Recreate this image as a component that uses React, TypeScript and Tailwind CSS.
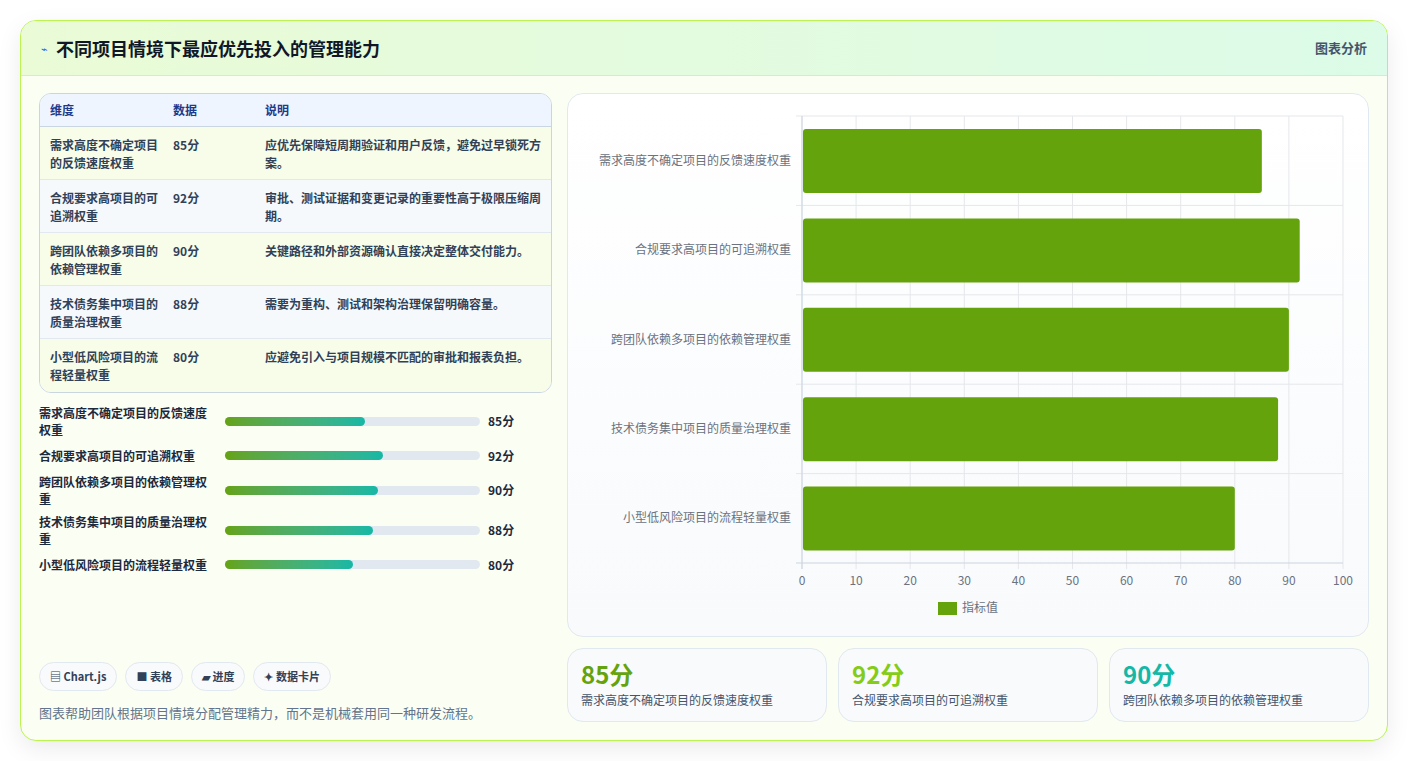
import React from "react";

const rows = [
  ["需求高度不确定项目的反馈速度权重", 85, "应优先保障短周期验证和用户反馈，避免过早锁死方案。"],
  ["合规要求高项目的可追溯权重", 92, "审批、测试证据和变更记录的重要性高于极限压缩周期。"],
  ["跨团队依赖多项目的依赖管理权重", 90, "关键路径和外部资源确认直接决定整体交付能力。"],
  ["技术债务集中项目的质量治理权重", 88, "需要为重构、测试和架构治理保留明确容量。"],
  ["小型低风险项目的流程轻量权重", 80, "应避免引入与项目规模不匹配的审批和报表负担。"],
] as const;

const font = { fontFamily: '"Noto Sans CJK SC", "Noto Sans", sans-serif' };

function Chart() {
  const x0 = 234, x1 = 775, y0 = 22, y1 = 469;
  const band = (y1 - y0) / 5;
  const sc = (x1 - x0) / 100;
  return (
    <svg width="800" height="540" viewBox="0 0 800 540" style={font}>
      {Array.from({ length: 11 }).map((_, i) => (
        <line key={i} x1={x0 + i * sc * 10} x2={x0 + i * sc * 10} y1={y0} y2={y1 + 6} stroke="#e5e7eb" />
      ))}
      {Array.from({ length: 6 }).map((_, i) => (
        <line key={i} x1={x0 - 6} x2={x1} y1={y0 + i * band} y2={y0 + i * band} stroke={i === 5 ? "#cbd5e1" : "#e5e7eb"} />
      ))}
      <line x1={x0} x2={x0} y1={y0} y2={y1 + 6} stroke="#cbd5e1" />
      {rows.map((r, i) => (
        <g key={i}>
          <rect x={x0 + 1} y={y0 + i * band + 13} width={r[1] * sc - 1} height={64} rx="3" fill="#65a30d" />
          <text x={223} y={y0 + i * band + band / 2 + 4} textAnchor="end" fontSize="12" fill="#6b7280">{r[0]}</text>
        </g>
      ))}
      {Array.from({ length: 11 }).map((_, i) => (
        <text key={i} x={x0 + i * sc * 10} y={491} textAnchor="middle" fontSize="12" fill="#6b7280">{i * 10}</text>
      ))}
      <rect x="370" y="508" width="19" height="13" fill="#65a30d" />
      <text x="394" y="518" fontSize="12" fill="#6b7280">指标值</text>
    </svg>
  );
}

export default function App() {
  return (
    <div className="min-h-[761px] bg-white p-5" style={font}>
      <div className="rounded-2xl border border-lime-300 bg-[#fbfff3] shadow-[0_8px_24px_rgba(0,0,0,0.08)] overflow-hidden">
        <div className="h-[55px] flex items-center justify-between px-5 bg-gradient-to-r from-[#eafbd6] to-[#dcfbe8] border-b border-[#dbe7d5]">
          <div className="flex items-center gap-2">
            <span className="text-[11px] text-blue-600">⌁</span>
            <h1 className="text-[18px] font-bold text-gray-900">不同项目情境下最应优先投入的管理能力</h1>
          </div>
          <span className="text-[13px] font-semibold text-slate-600">图表分析</span>
        </div>
        <div className="flex gap-[15px] px-[18px] pt-[17px] pb-[18px]">
          <div className="w-[513px] flex flex-col">
            <div className="rounded-xl border border-slate-300 overflow-hidden text-[12px]">
              <div className="grid grid-cols-[123px_92px_1fr] h-[33px] items-center px-[10px] bg-[#eef5ff] border-b border-slate-300 font-semibold text-[#1e3a8a]">
                <span>维度</span><span>数据</span><span>说明</span>
              </div>
              {rows.map((r, i) => (
                <div key={i} className={`grid grid-cols-[123px_92px_1fr] h-[53px] pt-[9px] px-[10px] leading-[18px] font-semibold text-slate-700 ${i % 2 === 0 ? "bg-[#f7fde9]" : "bg-[#f6f9fc]"} ${i < 4 ? "border-b border-slate-200" : ""}`}>
                  <span className="pr-3">{r[0]}</span>
                  <span>{r[1]}分</span>
                  <span>{r[2]}</span>
                </div>
              ))}
            </div>
            <div className="mt-[11px] flex flex-col gap-[6px]">
              {rows.map((r, i) => (
                <div key={i} className="flex items-center text-[12px] font-semibold text-slate-800">
                  <span className="w-[172px] leading-[17px] min-h-[23px] flex items-center">{r[0]}</span>
                  <div className="ml-[14px] w-[255px] h-[9px] rounded-full bg-[#e2e8f0]">
                    <div className="h-full rounded-full bg-gradient-to-r from-[#65a30d] to-[#14b8a6]" style={{ width: `${(r[1] - 30) * 2.55}px` }} />
                  </div>
                  <span className="ml-[8px]">{r[1]}分</span>
                </div>
              ))}
            </div>
            <div className="mt-auto flex gap-2 text-[11px] font-semibold text-slate-700">
              {["▤ Chart.js", "■ 表格", "▰ 进度", "✦ 数据卡片"].map((c) => (
                <span key={c} className="h-[29px] px-[10px] flex items-center rounded-full border border-slate-200 bg-[#f8fafc]">{c}</span>
              ))}
            </div>
            <p className="mt-[12px] text-[13px] text-slate-500">图表帮助团队根据项目情境分配管理精力，而不是机械套用同一种研发流程。</p>
          </div>
          <div className="w-[802px] flex flex-col gap-[11px]">
            <div className="h-[544px] rounded-2xl border border-slate-200 bg-gradient-to-b from-white to-[#f8fafc] overflow-hidden">
              <Chart />
            </div>
            <div className="grid grid-cols-3 gap-[11px]">
              {[
                [85, "需求高度不确定项目的反馈速度权重", "text-[#65a30d]"],
                [92, "合规要求高项目的可追溯权重", "text-[#84cc16]"],
                [90, "跨团队依赖多项目的依赖管理权重", "text-[#14b8a6]"],
              ].map(([v, t, c]) => (
                <div key={t as string} className="h-[74px] rounded-2xl border border-slate-200 bg-[#f8fafc] px-[13px] pt-[10px]">
                  <div className={`text-[24px] font-bold leading-[30px] ${c}`}>{v}分</div>
                  <div className="text-[12px] text-slate-600 mt-[2px]">{t}</div>
                </div>
              ))}
            </div>
          </div>
        </div>
      </div>
    </div>
  );
}
